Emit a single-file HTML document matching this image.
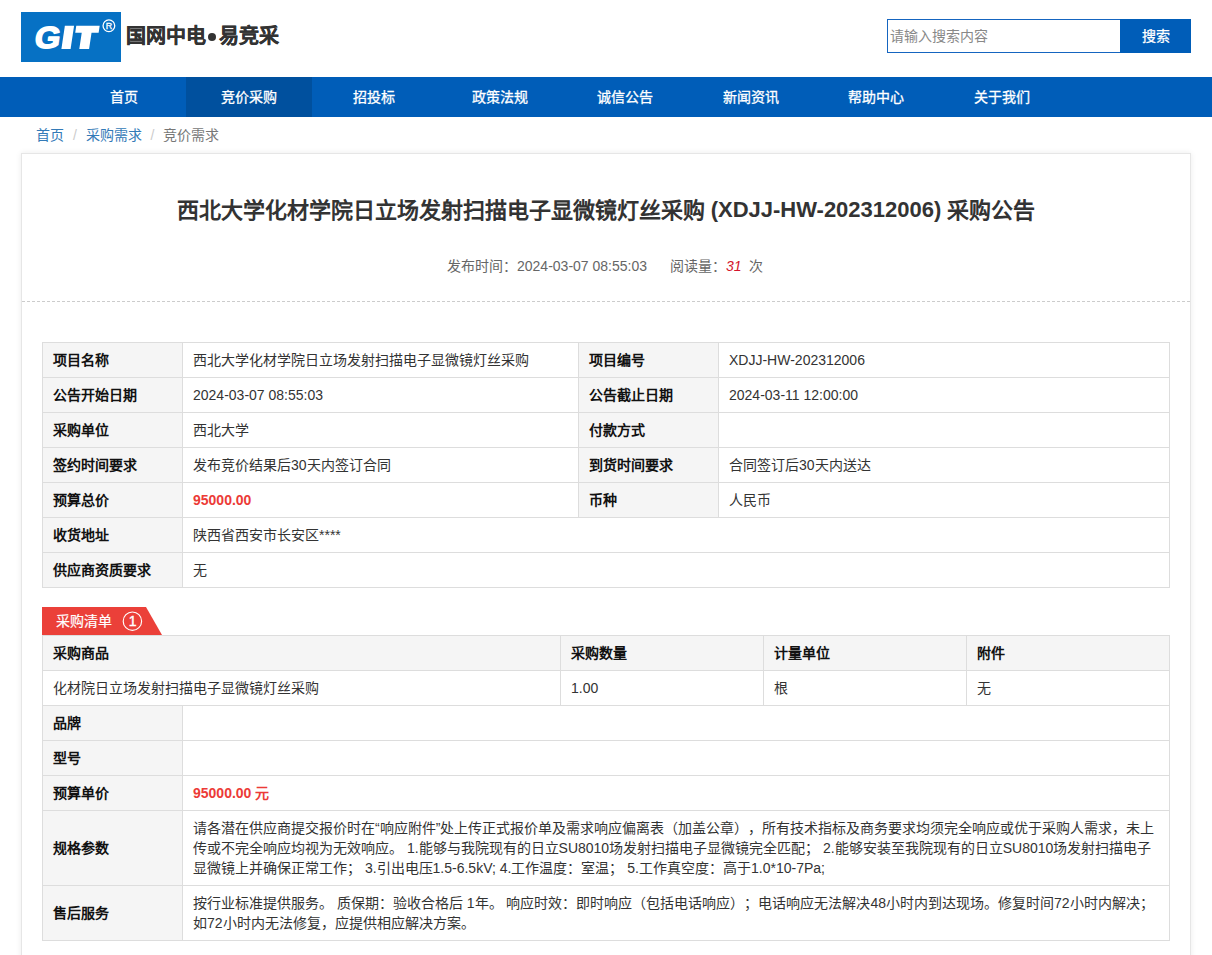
<!DOCTYPE html>
<html lang="zh-CN"><head><meta charset="utf-8">
<style>
*{box-sizing:border-box;margin:0;padding:0}
html,body{width:1212px;height:955px;overflow:hidden;background:#fff}
body{text-spacing-trim:space-all;font-family:"Liberation Sans",sans-serif;font-size:14px;line-height:20px;color:#333;position:relative}
.abs{position:absolute}
#logo{left:21px;top:12px;width:100px;height:50px;background:#0671c4}
#sitename{left:126px;top:22px;font-size:20px;line-height:28px;font-weight:bold;color:#333;white-space:nowrap;-webkit-text-stroke:0.35px #333}
#sitename i{display:inline-block;width:8.4px;height:8.4px;border-radius:50%;background:#333;margin:0 3px 0 2px;vertical-align:2px}
#search{left:887px;top:19px;width:233px;height:34px;border:1px solid #1565c0;border-right:none;background:#fff}
#search span{position:absolute;left:2px;top:6px;color:#888;font-size:14px;line-height:20px}
#sbtn{left:1120px;top:19px;width:71px;height:34px;background:#005db8;color:#fff;-webkit-text-stroke:0.3px #fff;text-align:center;line-height:34px}
#nav{left:0;top:77px;width:1212px;height:40px;background:#005db8}
#nav .it{position:absolute;top:0;height:40px;width:125.46px;text-align:center;line-height:40px;color:#fff;font-size:14px;-webkit-text-stroke:0.3px #fff}
#nav .it.on{background:#00509e}
#crumb{left:36px;top:125px;white-space:nowrap}
#crumb a{color:#337ab7;text-decoration:none}
#crumb .sep{color:#ccc;padding:0 5px}
#crumb .cur{color:#777}
#card{left:21px;top:153px;width:1170px;height:900px;border:1px solid #e6e6e6;box-shadow:0 0 6px rgba(0,0,0,.08);background:#fff}
#title{left:0;top:195px;width:1212px;text-align:center;font-size:22px;line-height:32px;font-weight:bold;color:#333;white-space:nowrap}
#meta{left:0;top:256px;width:1212px;color:#666;white-space:nowrap}
#meta span,#meta em{position:absolute;top:0}
#meta em{color:#d4142c;font-style:italic}
#dash{left:22px;top:301px;width:1168px;height:0;border-top:1px dashed #ccc}
table{border-collapse:collapse;position:absolute;left:42px;width:1128px;table-layout:fixed}
td,th{border:1px solid #ddd;padding:7px 10px;line-height:20px;font-size:14px;text-align:left;vertical-align:middle;color:#333;font-weight:normal}
td.l,th{background:#f5f5f5;font-weight:bold;color:#111}
.red{color:#ec3b37;font-weight:bold}
#t1{top:342px}
#t2{top:635px}
#tag{left:42px;top:607px;width:120px;height:28px}
</style></head>
<body>
<div id="logo" class="abs"><svg width="100" height="50" viewBox="0 0 100 50"><g transform="matrix(1,0,-0.15,1,5.55,0)" fill="#fff"><text x="14.2" y="35.8" transform="matrix(1.08,0,0,1,-2.9,0)" font-family="Liberation Sans" font-weight="bold" font-size="30.5" stroke="#fff" stroke-width="1.5" stroke-linejoin="round">G</text><path d="M40.4 13.8H49.6V37H40.4Z"/><path d="M51.8 13.8H75.2V20.8H68.1V37H58.3V20.8H51.8Z"/></g><circle cx="87.9" cy="13.75" r="5.85" fill="none" stroke="#fff" stroke-width="1.3"/><text x="88" y="17" text-anchor="middle" font-family="Liberation Sans" font-size="9" fill="#fff" stroke="#fff" stroke-width="0.3">R</text></svg></div>
<div id="sitename" class="abs">国网中电<i></i>易竞采</div>
<div id="search" class="abs"><span>请输入搜索内容</span></div>
<div id="sbtn" class="abs">搜索</div>
<div id="nav" class="abs">
<div class="it" style="left:60.8px">首页</div>
<div class="it on" style="left:186.26px">竞价采购</div>
<div class="it" style="left:311.72px">招投标</div>
<div class="it" style="left:437.18px">政策法规</div>
<div class="it" style="left:562.64px">诚信公告</div>
<div class="it" style="left:688.1px">新闻资讯</div>
<div class="it" style="left:813.56px">帮助中心</div>
<div class="it" style="left:939.02px">关于我们</div>
</div>
<div id="crumb" class="abs"><a>首页</a> <span class="sep">/&nbsp;</span><a>采购需求</a> <span class="sep">/&nbsp;</span><span class="cur">竞价需求</span></div>
<div id="card" class="abs"></div>
<div id="title" class="abs">西北大学化材学院日立场发射扫描电子显微镜灯丝采购 <span style="position:relative;top:-1px">(XDJJ-HW-202312006)</span> 采购公告</div>
<div id="meta" class="abs"><span style="left:447px">发布时间：</span><span style="left:517px">2024-03-07 08:55:03</span><span style="left:670px">阅读量：</span><em style="left:726px">31</em><span style="left:749px">次</span></div>
<div id="dash" class="abs"></div>
<table id="t1">
<colgroup><col style="width:140px"><col style="width:396px"><col style="width:140px"><col></colgroup>
<tr><td class="l">项目名称</td><td>西北大学化材学院日立场发射扫描电子显微镜灯丝采购</td><td class="l">项目编号</td><td>XDJJ-HW-202312006</td></tr>
<tr><td class="l">公告开始日期</td><td>2024-03-07 08:55:03</td><td class="l">公告截止日期</td><td>2024-03-11 12:00:00</td></tr>
<tr><td class="l">采购单位</td><td>西北大学</td><td class="l">付款方式</td><td></td></tr>
<tr><td class="l">签约时间要求</td><td>发布竞价结果后30天内签订合同</td><td class="l">到货时间要求</td><td>合同签订后30天内送达</td></tr>
<tr><td class="l">预算总价</td><td class="red">95000.00</td><td class="l">币种</td><td>人民币</td></tr>
<tr><td class="l">收货地址</td><td colspan="3">陕西省西安市长安区****</td></tr>
<tr><td class="l">供应商资质要求</td><td colspan="3">无</td></tr>
</table>
<svg id="tag" class="abs" width="120" height="28" viewBox="0 0 120 28"><path d="M0 0H104L120 28H0Z" fill="#eb4039"/><circle cx="90.4" cy="14.2" r="9.2" fill="none" stroke="#fff" stroke-width="1.15"/><text x="90.6" y="19.3" text-anchor="middle" font-family="Liberation Sans" font-size="14" fill="#fff" stroke="#fff" stroke-width="0.4">1</text></svg><div class="abs" style="left:56px;top:611px;color:#fff;line-height:20px;-webkit-text-stroke:0.2px #fff">采购清单</div>
<table id="t2">
<colgroup><col style="width:140px"><col style="width:378px"><col style="width:203px"><col style="width:203px"><col></colgroup>
<tr><th colspan="2">采购商品</th><th>采购数量</th><th>计量单位</th><th>附件</th></tr>
<tr><td colspan="2">化材院日立场发射扫描电子显微镜灯丝采购</td><td>1.00</td><td>根</td><td>无</td></tr>
<tr><td class="l">品牌</td><td colspan="4"></td></tr>
<tr><td class="l">型号</td><td colspan="4"></td></tr>
<tr><td class="l">预算单价</td><td colspan="4" class="red">95000.00 元</td></tr>
<tr><td class="l">规格参数</td><td colspan="4">请各潜在供应商提交报价时在“响应附件”处上传正式报价单及需求响应偏离表（加盖公章），所有技术指标及商务要求均须完全响应或优于采购人需求，未上传或不完全响应均视为无效响应。 1.能够与我院现有的日立SU8010场发射扫描电子显微镜完全匹配； 2.能够安装至我院现有的日立SU8010场发射扫描电子显微镜上并确保正常工作； 3.引出电压1.5-6.5kV; 4.工作温度：室温； 5.工作真空度：高于1.0*10-7Pa;</td></tr>
<tr><td class="l">售后服务</td><td colspan="4">按行业标准提供服务。 质保期：验收合格后 1年。 响应时效：即时响应（包括电话响应）；电话响应无法解决48小时内到达现场。修复时间72小时内解决；如72小时内无法修复，应提供相应解决方案。</td></tr>
</table>
</body></html>
